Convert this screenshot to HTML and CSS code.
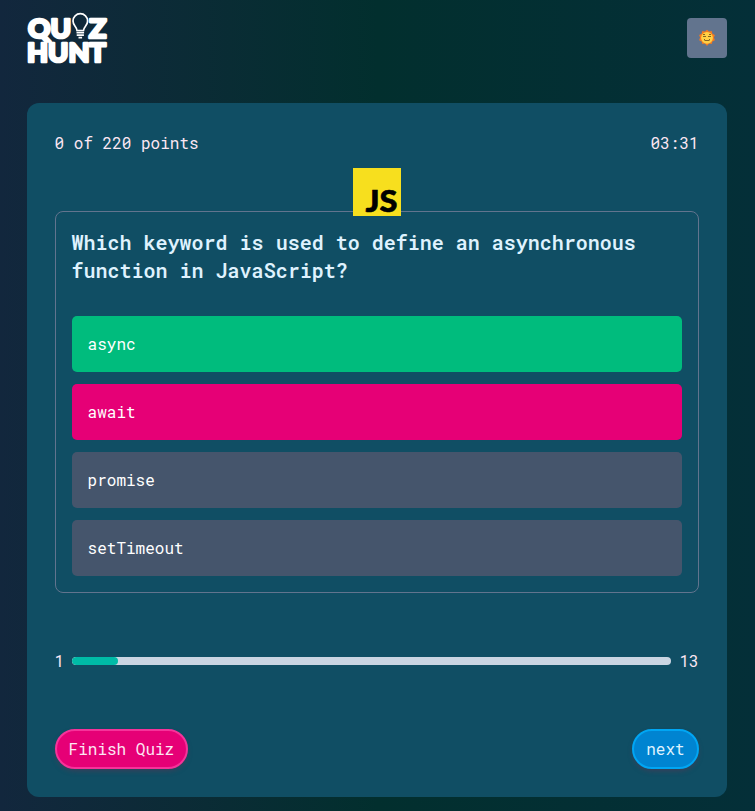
FILE: index.html
```html
<!DOCTYPE html>
<html lang="en">
<head>
<meta charset="utf-8">
<title>Quiz Hunt</title>
<link rel="stylesheet" href="styles.css">
</head>
<body>
<header class="header">
  <svg class="logo" width="80" height="52" viewBox="0 0 80 52" role="img" aria-label="Quiz Hunt">
    <g class="logo-text">
      <text x="1" y="26" textLength="43" lengthAdjust="spacingAndGlyphs">QU</text>
      <text x="62" y="26" textLength="17.500" lengthAdjust="spacingAndGlyphs">Z</text>
      <text x="0" y="49.600" textLength="79" lengthAdjust="spacingAndGlyphs">HUNT</text>
    </g>
    <g class="logo-bulb">
      <path d="M50 18.500C49.500 14 46 13.500 46 9a7.300 7.300 0 0 1 14.600 0C60.600 13.500 57 14 56.500 18.500Z"/>
      <path d="M49.500 20.700h7.600M49.700 23.200h7.200M51.500 25.600h3.600"/>
    </g>
  </svg>
  <button class="theme" aria-label="Toggle theme">
    <svg width="18" height="18" viewBox="0 0 18 18">
      <path fill="#f47b20" d="M9 .8l2 1.800 2.700-.5.7 2.700 2.500 1.200-1 2.600 1 2.600-2.500 1.200-.7 2.700-2.700-.5-2 2.300-2-2.300-2.700.5-.7-2.700-2.500-1.200 1-2.600-1-2.600 2.500-1.200.7-2.700 2.700.5Z"/>
      <circle cx="9" cy="8.800" r="5.900" fill="#ffd045"/>
      <path d="M5 5.500h2M11 5.500h2M5 7.500h3M10 7.500h3M6.500 11.500h5M6 10.500h1M11 10.500h1" fill="none" stroke="#65471b" stroke-width=".8"/>
    </svg>
  </button>
</header>
<main class="card">
  <div class="status"><span>0 of 220 points</span><span>03:31</span></div>
  <section class="question">
    <svg class="badge" width="48" height="48" viewBox="0 0 48 48">
      <rect width="48" height="48" fill="#f7df1e"/>
      <text class="badge-text" x="12.500" y="44" textLength="32" lengthAdjust="spacingAndGlyphs">JS</text>
    </svg>
    <h1>Which keyword is used to define an asynchronous function in JavaScript?</h1>
    <ul class="answers">
      <li class="correct">async</li>
      <li class="wrong">await</li>
      <li>promise</li>
      <li>setTimeout</li>
    </ul>
  </section>
  <div class="progress">
    <span>1</span>
    <div class="track"><div class="fill" style="width:7.700%"></div></div>
    <span>13</span>
  </div>
  <div class="actions">
    <button class="pill finish">Finish Quiz</button>
    <button class="pill next">next</button>
  </div>
</main>
</body>
</html>
```
FILE: styles.css
```css
* { box-sizing: border-box; margin: 0; padding: 0; }
body {
  min-height: 811px;
  padding: 12px 28.4px 14px 26.6px;
  background: linear-gradient(to right in oklab, #12273d, #022f2e 50%, #042f38);
  color: #fce7f3;
  font: 16px/24px "Roboto Mono", "DejaVu Sans Mono", monospace;
}
button { font: inherit; border: 0; }
.header { display: flex; justify-content: space-between; align-items: center; height: 52px; margin-bottom: 39px; }
.logo { display: block; overflow: visible; }
.logo-text { font: 900 26px/1 Lato, sans-serif; fill: #fff; stroke: #fff; stroke-width: 2.6px; stroke-linejoin: round; }
.logo-bulb { fill: none; stroke: #fff; stroke-width: 1.7px; }
.theme { display: flex; align-items: center; justify-content: center; width: 40px; height: 40px; border-radius: 4px; background: #62748e; }
.card { height: 694px; padding: 28px; border-radius: 12px; background: #104e64; }
.status { display: flex; justify-content: space-between; }
.question { position: relative; height: 382px; margin-top: 56px; padding: 16px 16px 16px; border: 1px solid #62748e; border-radius: 8px; }
.badge { position: absolute; top: -44px; left: 297.4px; overflow: visible; }
.badge-text { font: 900 31px Lato, sans-serif; stroke: #000; stroke-width: .6px; }
h1 { color: #dff2fe; font-size: 20px; line-height: 28px; font-weight: 600; }
.answers { display: grid; gap: 12px; margin-top: 32px; list-style: none; color: #fff; }
.answers li { height: 56px; padding: 16px; border-radius: 5px; background: #45556c; }
.answers .correct { background: #00bc7d; }
.answers .wrong { background: #e60076; }
.progress { display: flex; align-items: center; gap: 8px; margin-top: 56px; }
.track { flex: 1; height: 8px; border-radius: 4px; background: #cad5e2; overflow: hidden; }
.fill { height: 8px; border-radius: 4px; background: #00bba7; }
.actions { display: flex; justify-content: space-between; margin-top: 56px; }
.pill { height: 40px; padding: 0 12px; border: 2px solid; border-radius: 20px; box-shadow: 0 3px 5px -1px rgba(100, 50, 80, .5); }
.finish { background: #e60076; border-color: #f6339a; color: #fce7f3; }
.next { background: #0084d1; border-color: #00a6f4; color: #dff2fe; }
```
